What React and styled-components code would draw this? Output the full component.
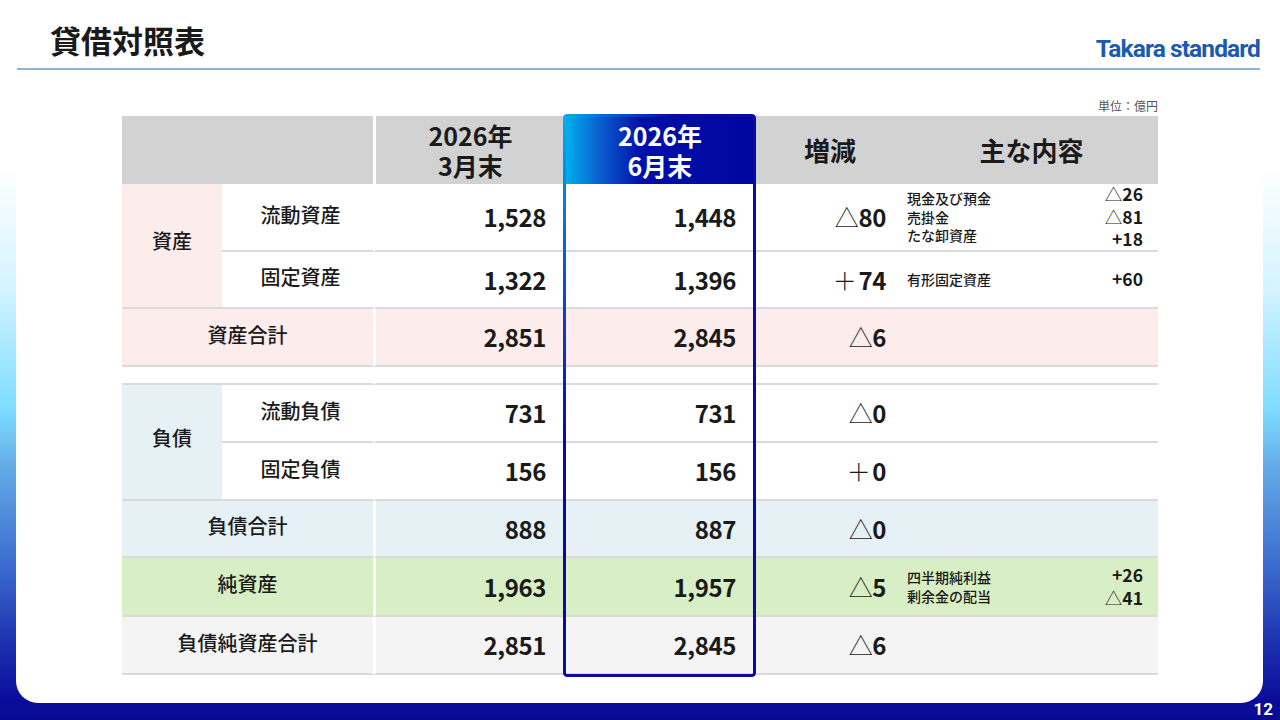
import React from 'react';
import styled, { createGlobalStyle } from 'styled-components';

const Global = createGlobalStyle`
  html, body { margin: 0; padding: 0; }
  body {
    width: 1280px; height: 720px; overflow: hidden;
    font-family: "Noto Sans CJK JP", "Noto Sans", sans-serif;
    color: #1a1a1a;
  }
`;

const Page = styled.div`
  position: relative;
  width: 1280px;
  height: 720px;
  box-sizing: border-box;
  padding: 0 17px 17px 16px;
  background: linear-gradient(to bottom,
    #ffffff 0px, #ffffff 165px, #d2f3ff 290px, #7ddcff 410px,
    #62a9e6 470px, #3c6ccf 565px, #1a2cad 650px, #0a0d9a 700px, #070b94 720px);
`;

const Card = styled.div`
  height: 703px;
  background: #ffffff;
  border-radius: 0 0 22px 22px;
  display: flex;
  flex-direction: column;
`;

const Header = styled.header`
  height: 70px;
  box-sizing: border-box;
  margin: 0 3px 0 1px;
  padding: 12px 0 0 33px;
  border-bottom: 2px solid #8db4dc;
  display: flex;
  justify-content: space-between;
  align-items: center;
`;

const Title = styled.h1`
  margin: 0;
  font-size: 31px;
  font-weight: 700;
  line-height: 36px;
  color: #1a1a1a;
`;

const Logo = styled.div`
  margin-top: 17px;
  font-family: Roboto, "Liberation Sans", sans-serif;
  font-weight: 700;
  font-size: 24.5px;
  letter-spacing: -0.9px;
  line-height: 26px;
  color: #1a5cab;
`;

const Unit = styled.div`
  width: 1036px;
  margin: 28px 0 2px 106px;
  text-align: right;
  font-size: 12px;
  line-height: 16px;
  color: #555555;
`;

const Table = styled.div`
  position: relative;
  margin-left: 106px;
  width: 1036px;
  display: grid;
  grid-template-columns: 100px 151px 192px 190px 150px 253px;
  grid-template-rows: 68px 68px 57px 58px 18px 58px 58px 57px 59px 58px;
`;

const tones = {
  white: '#ffffff',
  head: '#d2d2d2',
  pink: '#fdecec',
  blue: '#e5f1f4',
  green: '#d8eec4',
  gray: '#f4f4f4',
};

const BaseCell = styled.div`
  box-sizing: border-box;
  background: ${p => tones[p.$tone || 'white']};
  border-left: ${p => (p.$sep ? '3px solid #ffffff' : '0')};
  border-bottom: ${p => (p.$line === false ? '0' : '2px solid #dadada')};
  display: flex;
  align-items: center;
`;

const HeadCell = styled(BaseCell).attrs({ $tone: 'head', $line: false })`
  grid-column: span ${p => p.$span || 1};
  justify-content: center;
  text-align: center;
  font-size: ${p => (p.$big ? '26px' : '25px')};
  font-weight: 700;
  line-height: 30px;
`;

const JuneHead = styled(BaseCell).attrs({ $line: false })`
  justify-content: center;
  text-align: center;
  font-size: 25px;
  font-weight: 700;
  line-height: 30px;
  color: #ffffff;
  background: linear-gradient(90deg, #00b2ef 0%, #0a5fd0 18%, #0010a8 40%, #0006a0 100%);
`;

const GroupCell = styled(BaseCell)`
  grid-row: span 2;
  justify-content: center;
  font-size: 20px;
  font-weight: 500;
  padding-bottom: 10px;
`;

const ItemCell = styled(BaseCell)`
  justify-content: center;
  padding-left: 6px;
  padding-bottom: 6px;
  font-size: 20px;
  font-weight: 500;
`;

const TotalLabel = styled(BaseCell)`
  grid-column: span 2;
  justify-content: center;
  padding-bottom: 6px;
  font-size: 20px;
  font-weight: 500;
`;

const SpacerCell = styled(BaseCell)`
  grid-column: span ${p => p.$span || 1};
`;

const NumCell = styled(BaseCell)`
  justify-content: flex-end;
  padding-right: 19px;
  font-size: 24px;
  font-weight: 700;
  letter-spacing: -0.4px;
  line-height: 28px;
`;

const DiffCell = styled(NumCell)`
  padding-right: 19px;
`;

const Sign = styled.span`
  font-weight: 300;
  margin-right: ${p => (p.$gap ? '2px' : '0')};
`;

const DetailCell = styled(BaseCell)`
  justify-content: space-between;
  padding: 0 15px 0 2px;
`;

const DetailLabels = styled.div`
  display: flex;
  flex-direction: column;
  font-size: 14px;
  font-weight: 500;
  line-height: 18.5px;
`;

const DetailValues = styled.div`
  display: flex;
  flex-direction: column;
  align-items: flex-end;
  font-size: 17.5px;
  font-weight: 700;
  line-height: 22.5px;
`;

const JuneFrame = styled.div`
  position: absolute;
  left: 441px;
  top: -2px;
  width: 193px;
  height: 563px;
  box-sizing: border-box;
  padding: 3px;
  border-radius: 4px;
  pointer-events: none;
  background: radial-gradient(ellipse 110px 330px at 0 0, #00b0f0 0%, #0a58d4 45%, #0a0aa5 100%);
  -webkit-mask: linear-gradient(#000 0 0) content-box, linear-gradient(#000 0 0);
  -webkit-mask-composite: xor;
  mask-composite: exclude;
`;

const PageNo = styled.div`
  position: absolute;
  right: 7px;
  bottom: 1px;
  font-family: Roboto, "Noto Sans", sans-serif;
  font-size: 17px;
  line-height: 20px;
  font-weight: 700;
  color: #ffffff;
`;

const Diff = ({ sign, value, tone }) => (
  <DiffCell $tone={tone}>
    <Sign $gap={sign === '＋'}>{sign}</Sign>
    {value}
  </DiffCell>
);

const Detail = ({ items = [], tone }) => (
  <DetailCell $tone={tone}>
    <DetailLabels>
      {items.map(i => (
        <span key={i[0]}>{i[0]}</span>
      ))}
    </DetailLabels>
    <DetailValues>
      {items.map(i => (
        <span key={i[0]}>
          {i[1] === '△' ? <Sign>△</Sign> : i[1]}
          {i[2]}
        </span>
      ))}
    </DetailValues>
  </DetailCell>
);

const GroupRows = ({ group, tone, rows }) => (
  <>
    <GroupCell $tone={tone}>{group}</GroupCell>
    {rows.map(r => (
      <React.Fragment key={r.label}>
        <ItemCell>{r.label}</ItemCell>
        <NumCell $sep>{r.mar}</NumCell>
        <NumCell>{r.jun}</NumCell>
        <Diff sign={r.diff[0]} value={r.diff[1]} />
        <Detail items={r.details} />
      </React.Fragment>
    ))}
  </>
);

const TotalRow = ({ label, mar, jun, diff, details, tone }) => (
  <>
    <TotalLabel $tone={tone}>{label}</TotalLabel>
    <NumCell $tone={tone} $sep>{mar}</NumCell>
    <NumCell $tone={tone}>{jun}</NumCell>
    <Diff sign={diff[0]} value={diff[1]} tone={tone} />
    <Detail items={details} tone={tone} />
  </>
);

const assets = [
  {
    label: '流動資産', mar: '1,528', jun: '1,448', diff: ['△', '80'],
    details: [['現金及び預金', '△', '26'], ['売掛金', '△', '81'], ['たな卸資産', '+', '18']],
  },
  {
    label: '固定資産', mar: '1,322', jun: '1,396', diff: ['＋', '74'],
    details: [['有形固定資産', '+', '60']],
  },
];

const liabilities = [
  { label: '流動負債', mar: '731', jun: '731', diff: ['△', '0'], details: [] },
  { label: '固定負債', mar: '156', jun: '156', diff: ['＋', '0'], details: [] },
];

export default function App() {
  return (
    <Page>
      <Global />
      <Card>
        <Header>
          <Title>貸借対照表</Title>
          <Logo>Takara standard</Logo>
        </Header>
        <Unit>単位：億円</Unit>
        <Table>
          <HeadCell $span={2} />
          <HeadCell $sep>2026年<br />3月末</HeadCell>
          <JuneHead>2026年<br />6月末</JuneHead>
          <HeadCell $big>増減</HeadCell>
          <HeadCell $big>主な内容</HeadCell>

          <GroupRows group="資産" tone="pink" rows={assets} />
          <TotalRow label="資産合計" mar="2,851" jun="2,845" diff={['△', '6']} tone="pink" />

          <SpacerCell $span={2} />
          <SpacerCell $sep />
          <SpacerCell />
          <SpacerCell />
          <SpacerCell />

          <GroupRows group="負債" tone="blue" rows={liabilities} />
          <TotalRow label="負債合計" mar="888" jun="887" diff={['△', '0']} tone="blue" />
          <TotalRow
            label="純資産" mar="1,963" jun="1,957" diff={['△', '5']} tone="green"
            details={[['四半期純利益', '+', '26'], ['剰余金の配当', '△', '41']]}
          />
          <TotalRow label="負債純資産合計" mar="2,851" jun="2,845" diff={['△', '6']} tone="gray" />

          <JuneFrame />
        </Table>
      </Card>
      <PageNo>12</PageNo>
    </Page>
  );
}
